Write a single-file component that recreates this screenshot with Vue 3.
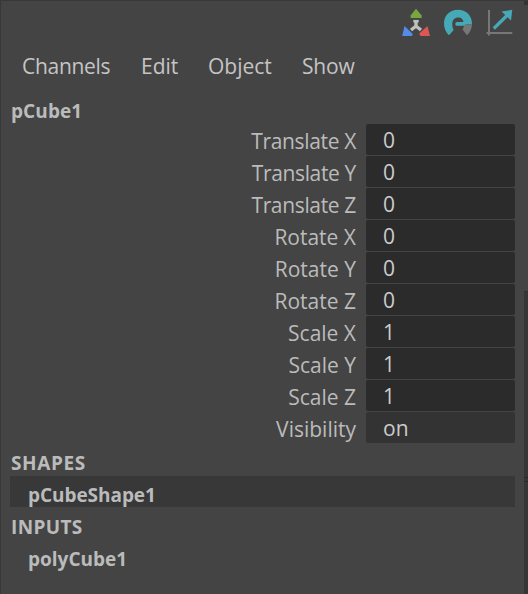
<script setup>
const menus = [
  { label: 'Channels', cls: 'channels' },
  { label: 'Edit', cls: 'edit' },
  { label: 'Object', cls: 'object' },
  { label: 'Show', cls: 'show' },
]
const attributes = [
  ['Translate X', '0'], ['Translate Y', '0'], ['Translate Z', '0'],
  ['Rotate X', '0'], ['Rotate Y', '0'], ['Rotate Z', '0'],
  ['Scale X', '1'], ['Scale Y', '1'], ['Scale Z', '1'],
  ['Visibility', 'on'],
]
</script>

<template>
  <div class="panel">
    <div class="content">
      <div class="tools">
        <svg width="28" height="30" viewBox="0 0 28 30">
          <path d="M14 12V19.5M14.2 18L9 22M13.8 18L19 22" fill="none" stroke="#c0c0c0" stroke-width="3.4" />
          <path d="M11.3 13.2H16.7" stroke="#c0c0c0" stroke-width="2.6" />
          <path d="M14 .7L19.6 7.5V10H8.6V7.5Z" fill="#76a83e" />
          <path d="M2.5 18L10.8 26L9.8 28H.2Z" fill="#558be8" />
          <path d="M25.5 18L28 28H18.4L17.2 25.6Z" fill="#dd5555" />
        </svg>
        <svg width="28" height="30" viewBox="0 0 28 30">
          <path d="M0 15.5C0 7.3 6 1.8 14 1.8S28 7.3 28 16L19.5 17C20 12 18 9.5 14.3 9.5S8.3 12 8.3 16C8.3 18.5 8.8 20.5 9.7 22L5 27.3C2 24.5 0 20.5 0 15.5Z" fill="#46a9b6" />
          <path d="M13 14H21V17.8H13Q11.3 17.8 11.3 15.9T13 14Z" fill="#46a9b6" />
          <path d="M20 17.2L28 16C28 20.5 26 24.5 23 27.3L18.5 21.5C19.4 20.2 19.8 19 20 17.2Z" fill="#777" />
        </svg>
        <svg width="28" height="30" viewBox="0 0 28 30">
          <path d="M3 2V27.5M.5 25H26.3" fill="none" stroke="#777" stroke-width="2" />
          <path d="M7.8 20.5L21.5 7" stroke="#46a9b6" stroke-width="3.2" />
          <path d="M15.5 3.6L26.3 1.8L25 12.5Z" fill="#46a9b6" />
        </svg>
      </div>
      <nav class="menu">
        <span v-for="m in menus" :key="m.label" :class="m.cls">{{ m.label }}</span>
      </nav>
      <div class="heading node">pCube1</div>
      <div class="attributes">
        <div v-for="[label, value] in attributes" :key="label" class="row">
          <span class="label" :class="{ tight: label.startsWith('Translate') }">{{ label }}</span>
          <span class="field" :class="{ toggle: value === 'on' }">{{ value }}</span>
        </div>
      </div>
      <div class="sections">
        <div class="heading shapes">SHAPES</div>
        <div class="heading child selected">pCubeShape1</div>
        <div class="heading inputs">INPUTS</div>
        <div class="heading child poly">polyCube1</div>
      </div>
    </div>
    <div class="rail">
      <div class="cap"></div>
      <div class="track"><div class="grip"></div></div>
    </div>
  </div>
</template>

<style>
body { background: #444; }
</style>
<style scoped>
.panel {
  box-sizing: border-box;
  width: 528px;
  height: 594px;
  display: flex;
  overflow: hidden;
  background: #444;
  border-left: 1px solid #383838;
  border-top: 1px solid #383838;
  color: #bbb;
  font: 21px/32px "Open Sans", "Noto Sans", sans-serif;
}
.content { width: 523px; padding-left: 9px; box-sizing: border-box; }
.tools { display: flex; justify-content: flex-end; gap: 14px; height: 49px; padding: 7px 10px 0 0; box-sizing: border-box; }
.tools svg { display: block; }
.menu { display: flex; height: 32px; padding-left: 12px; color: #c5c5c5; }
.menu span { white-space: nowrap; }
.channels { width: 119px; letter-spacing: -0.3px; }
.edit { width: 67px; }
.object { width: 94px; }
.show { letter-spacing: -0.15px; }
.heading { font-size: 19px; font-weight: 700; height: 32px; padding-left: 1px; color: #bbb; box-sizing: border-box; }
.node { height: 42px; line-height: 59px; letter-spacing: 0.1px; }
.row { display: flex; height: 32px; width: 505px; }
.label { width: 346px; text-align: right; line-height: 35px; white-space: nowrap; }
.tight { letter-spacing: -0.35px; }
.field { margin-left: 10px; flex: 1; height: 31px; box-sizing: border-box; padding-left: 17px; background: #2b2b2b; color: #ccc; border-radius: 2px; }
.toggle { background: #333; }
.sections { padding-top: 1px; }
.shapes { line-height: 36px; height: 31px; letter-spacing: 0.6px; }
.child { padding-left: 18px; }
.selected { width: 505px; background: #383838; height: 31px; line-height: 38px; letter-spacing: -0.05px; }
.inputs { line-height: 40px; letter-spacing: 0.35px; }
.poly { line-height: 40px; }
.rail { width: 4px; display: flex; flex-direction: column; justify-content: space-between; }
.cap { height: 4px; background: #333; }
.track { height: 303px; box-sizing: border-box; padding-top: 4px; background: #363636; border-top: 1px solid #303030; }
.grip { margin-top: 181px; height: 3px; border-top: 1px solid #292929; border-bottom: 1px solid #292929; }
</style>
